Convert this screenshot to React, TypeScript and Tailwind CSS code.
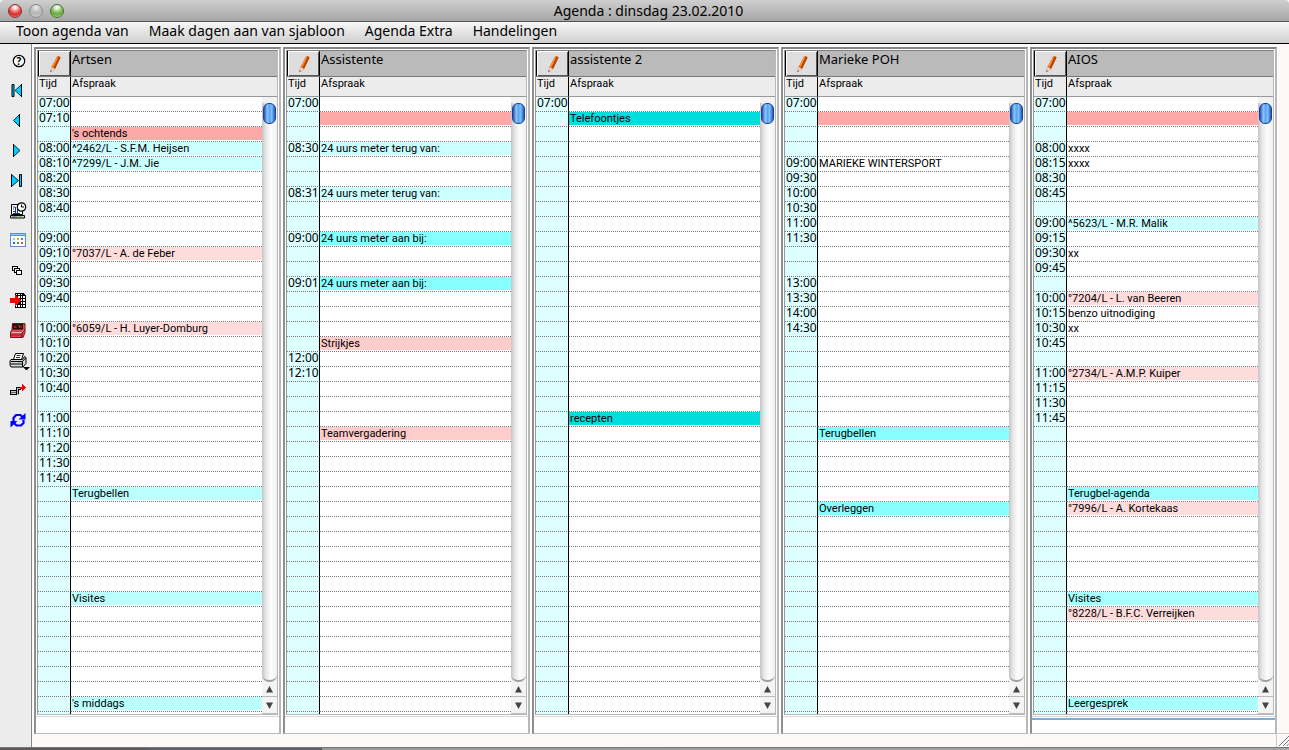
import { ReactNode } from "react";

type Tone = "rose" | "blush" | "pink" | "ice" | "aqua" | "sky" | "pale" | "cyan" | "teal";

type Entry = {
  row: number;
  text: string;
  tone?: Tone;
};

type Agenda = {
  name: string;
  times: Record<number, string>;
  entries: Entry[];
  active?: boolean;
};

const ROW_COUNT = 41;

const tones: Record<Tone, string> = {
  rose: "bg-[#ffa8a8]",
  blush: "bg-[#ffdcdc]",
  pink: "bg-[#ffcccc]",
  ice: "bg-[#ccffff]",
  aqua: "bg-[#aaffff]",
  sky: "bg-[#99ffff]",
  pale: "bg-[#bbffff]",
  cyan: "bg-[#88ffff]",
  teal: "bg-[#00dddd]",
};

const agendas: Agenda[] = [
  {
    name: "Artsen",
    times: {
      0: "07:00", 1: "07:10", 3: "08:00", 4: "08:10", 5: "08:20", 6: "08:30", 7: "08:40",
      9: "09:00", 10: "09:10", 11: "09:20", 12: "09:30", 13: "09:40",
      15: "10:00", 16: "10:10", 17: "10:20", 18: "10:30", 19: "10:40",
      21: "11:00", 22: "11:10", 23: "11:20", 24: "11:30", 25: "11:40",
    },
    entries: [
      { row: 2, text: "'s ochtends", tone: "rose" },
      { row: 3, text: "^2462/L - S.F.M. Heijsen", tone: "ice" },
      { row: 4, text: "^7299/L - J.M. Jie", tone: "ice" },
      { row: 10, text: "°7037/L - A. de Feber", tone: "blush" },
      { row: 15, text: "°6059/L - H. Luyer-Domburg", tone: "blush" },
      { row: 26, text: "Terugbellen", tone: "pale" },
      { row: 33, text: "Visites", tone: "pale" },
      { row: 40, text: "'s middags", tone: "pale" },
    ],
  },
  {
    name: "Assistente",
    times: { 0: "07:00", 3: "08:30", 6: "08:31", 9: "09:00", 12: "09:01", 17: "12:00", 18: "12:10" },
    entries: [
      { row: 1, text: "", tone: "rose" },
      { row: 3, text: "24 uurs meter terug van:", tone: "ice" },
      { row: 6, text: "24 uurs meter terug van:", tone: "ice" },
      { row: 9, text: "24 uurs meter aan bij:", tone: "cyan" },
      { row: 12, text: "24 uurs meter aan bij:", tone: "cyan" },
      { row: 16, text: "Strijkjes", tone: "pink" },
      { row: 22, text: "Teamvergadering", tone: "pink" },
    ],
  },
  {
    name: "assistente 2",
    times: { 0: "07:00" },
    entries: [
      { row: 1, text: "Telefoontjes", tone: "teal" },
      { row: 21, text: "recepten", tone: "teal" },
    ],
  },
  {
    name: "Marieke POH",
    times: {
      0: "07:00", 4: "09:00", 5: "09:30", 6: "10:00", 7: "10:30", 8: "11:00", 9: "11:30",
      12: "13:00", 13: "13:30", 14: "14:00", 15: "14:30",
    },
    entries: [
      { row: 1, text: "", tone: "rose" },
      { row: 4, text: "MARIEKE WINTERSPORT" },
      { row: 22, text: "Terugbellen", tone: "cyan" },
      { row: 27, text: "Overleggen", tone: "cyan" },
    ],
  },
  {
    name: "AIOS",
    active: true,
    times: {
      0: "07:00", 3: "08:00", 4: "08:15", 5: "08:30", 6: "08:45",
      8: "09:00", 9: "09:15", 10: "09:30", 11: "09:45",
      13: "10:00", 14: "10:15", 15: "10:30", 16: "10:45",
      18: "11:00", 19: "11:15", 20: "11:30", 21: "11:45",
    },
    entries: [
      { row: 1, text: "", tone: "rose" },
      { row: 3, text: "xxxx" },
      { row: 4, text: "xxxx" },
      { row: 8, text: "^5623/L - M.R. Malik", tone: "ice" },
      { row: 10, text: "xx" },
      { row: 13, text: "°7204/L - L. van Beeren", tone: "blush" },
      { row: 14, text: "benzo uitnodiging" },
      { row: 15, text: "xx" },
      { row: 18, text: "°2734/L - A.M.P. Kuiper", tone: "blush" },
      { row: 26, text: "Terugbel-agenda", tone: "sky" },
      { row: 27, text: "°7996/L - A. Kortekaas", tone: "blush" },
      { row: 33, text: "Visites", tone: "aqua" },
      { row: 34, text: "°8228/L - B.F.C. Verreijken", tone: "blush" },
      { row: 40, text: "Leergesprek", tone: "aqua" },
    ],
  },
];

const menus = ["Toon agenda van", "Maak dagen aan van sjabloon", "Agenda Extra", "Handelingen"];

function Svg({ children, crisp = false }: { children: ReactNode; crisp?: boolean }) {
  return (
    <svg
      className="shrink-0"
      width="24"
      height="20"
      viewBox="0 0 24 20"
      fill="none"
      shapeRendering={crisp ? "crispEdges" : "auto"}
    >
      {children}
    </svg>
  );
}

function HelpIcon() {
  return (
    <Svg>
      <circle cx="11" cy="11" r="5.7" fill="white" stroke="black" strokeWidth="1.2" />
      <text x="11" y="14.6" textAnchor="middle" fontSize="10" fontWeight="700" fontFamily="Noto Sans" fill="black">?</text>
    </Svg>
  );
}

function FirstIcon() {
  return (
    <Svg>
      <path d="M4 4.5h2v12H4Z" fill="#00ccff" stroke="black" />
      <path d="M13.500 4.500v12L7 10.500Z" fill="#00ccff" stroke="#003344" />
      <path d="M13.500 4v13" stroke="black" />
    </Svg>
  );
}

function PrevIcon() {
  return (
    <Svg>
      <path d="M11.5 4.5v12L5.5 10.5Z" fill="#00ccff" stroke="#003344" />
      <path d="M11.5 4v13" stroke="black" />
    </Svg>
  );
}

function NextIcon() {
  return (
    <Svg>
      <path d="M5.5 4.5v12L12 10.5Z" fill="#00ccff" stroke="#003344" />
      <path d="M5.5 4v13" stroke="black" />
    </Svg>
  );
}

function LastIcon() {
  return (
    <Svg>
      <path d="M3.5 4.5v12l7-6Z" fill="#00ccff" stroke="#003344" />
      <path d="M3.5 4v13" stroke="black" />
      <path d="M11.5 4.5h2v12h-2Z" fill="#00ccff" stroke="black" />
    </Svg>
  );
}

function PlanIcon() {
  return (
    <Svg>
      <path d="M3.5 4.5h11v10h-11Z" fill="white" stroke="black" />
      <path d="M2.5 15.5h14v2.500h-14Z" fill="#d8d8d8" stroke="black" />
      <path d="M4 17h5" stroke="#555" />
      <path d="M10 17h4" stroke="#3a3" />
      <path d="M5 7h2M5 9h1M5 11.5h2M7.5 7v6M9.5 9v4M5 13.5h7" stroke="#223388" strokeWidth="1.1" />
      <circle cx="13.5" cy="7" r="4.2" fill="white" stroke="black" strokeWidth="1.2" />
      <path d="M13.5 4.5V7h2.5" stroke="black" />
    </Svg>
  );
}

function MonthIcon() {
  return (
    <Svg crisp>
      <rect x="2" y="3" width="16" height="14" fill="#5b8fdc" />
      <rect x="3" y="6" width="14" height="10" fill="#fafcff" />
      <rect x="3" y="4" width="14" height="1" fill="#9dc3f5" />
      <path d="M5 8h2v2H5Z" fill="#a8c4e8" />
      <path d="M9 8h2v2H9Z" fill="#f0a030" />
      <path d="M13 8h2v2h-2Z" fill="#4a7ed0" />
      <path d="M5 12h2v2H5Z" fill="#3a66c0" />
      <path d="M9 12h2v2H9Z" fill="#45a045" />
      <path d="M13 12h2v2h-2Z" fill="#d05050" />
    </Svg>
  );
}

function StackIcon() {
  return (
    <Svg crisp>
      <path d="M4.5 6.5h5v4h-5Z" fill="white" stroke="black" />
      <path d="M6.5 8.5h5v4h-5Z" fill="white" stroke="black" />
      <path d="M8.5 10.5h5v4h-5Z" fill="white" stroke="black" />
    </Svg>
  );
}

function ExportIcon() {
  return (
    <Svg crisp>
      <path d="M7 3h8l3 3v12H7Z" fill="black" />
      <path
        d="M8 4h1v1H8Zm2 0h2v1h-2Zm3 0h1v1h-1ZM8 6h1v2H8Zm2 0h2v2h-2Zm3 0h1v2h-1Zm2 0h2v2h-2ZM10 9h2v2h-2Zm3 0h1v2h-1Zm2 0h2v2h-2Zm-2 3h1v2h-1Zm2 0h2v2h-2ZM8 15h1v2H8Zm2 0h2v2h-2Zm3 0h1v2h-1Zm2 0h2v2h-2Z"
        fill="white"
      />
      <path d="M2 8h5V5l6 5.500L7 16v-3H2Z" fill="#ff0000" />
    </Svg>
  );
}

function RegisterIcon() {
  return (
    <Svg>
      <path d="M4.5 3.5h12.5v9l-2 5H2.5v-5.5l1.5-2Z" fill="#d94452" stroke="#8a0f1c" />
      <path d="M4.5 4h10.5v5.5H4.5Z" fill="#2a0508" />
      <path d="M6 5.5l2.5 2.5M8.5 5.5L6 8M10 5.5h1.5V8M13 5.5V8" stroke="#e02030" />
      <path d="M3.5 12.5h10l2-2" stroke="#ffb8b8" />
      <path d="M3 15h10.5" stroke="#a01828" />
      <path d="M14 17v-4l3-3" stroke="#70101c" />
    </Svg>
  );
}

function PrinterIcon() {
  return (
    <Svg>
      <path d="M7.5 3.5h8l-2 6h-8Z" fill="white" stroke="black" />
      <path d="M8.5 5.5h4M8 7.5h4" stroke="black" strokeWidth="0.8" />
      <path d="M3 9.5h11.5l2-3 1.5 1v6l-3 3.5H3L2 15v-4Z" fill="#d6d6d6" stroke="black" />
      <path d="M3 11.5h11.5l3-3.5M2.5 14h12v3M14.5 11.5v3" stroke="black" />
      <path d="M11 13h2" stroke="#4c4" />
      <path d="M15 17h7l-3.5 3.500Z" fill="black" />
    </Svg>
  );
}

function MoveIcon() {
  return (
    <Svg crisp>
      <path d="M2.5 10.5h6v4h-6Z" fill="#c8c8c8" stroke="black" />
      <path d="M3 12.5h5" stroke="#666" />
      <path d="M8 7h5v3h-2v5H8Z" fill="#b8b8b8" />
      <path d="M8.5 15V7.5H13M10.5 14V9.500H13" stroke="black" />
      <path d="M12 7.5h3" stroke="#ff0000" strokeWidth="2" />
      <path d="M14 4l4.500 3.500L14 11Z" fill="#ff0000" />
    </Svg>
  );
}

function RefreshIcon() {
  return (
    <Svg>
      <path d="M5.500 11V8L8 5h4.500L15 7.500" stroke="#0000ff" strokeWidth="2.2" />
      <path d="M10.500 9.500H17.500V3Z" fill="#0000ff" />
      <path d="M15.500 10v3L13 15.500H8.500L6 13" stroke="#0000ff" strokeWidth="2.2" />
      <path d="M9.500 11H2.500v6.500Z" fill="#0000ff" />
    </Svg>
  );
}

function PencilIcon() {
  return (
    <svg width="16" height="18" viewBox="0 0 16 18">
      <path d="M10 1.5Q12 .5 13.5 2.5L8 14 4.5 12Z" fill="#e8650c" />
      <path d="M11.5 1.5Q13 1.5 13.5 2.5L8 14l-1.500-1Z" fill="#b84400" />
      <path d="M10.5 2.5 6 11.5" stroke="#ff9a4a" />
      <path d="M4.5 12 8 14l-4.500 3Z" fill="#f5dcc8" stroke="#c09080" strokeWidth=".5" />
      <path d="M3.8 15.2 3.3 17l1.5-.9Z" fill="#333" />
    </svg>
  );
}

const tools = [
  { label: "Help", icon: <HelpIcon /> },
  { label: "Eerste dag", icon: <FirstIcon /> },
  { label: "Vorige dag", icon: <PrevIcon /> },
  { label: "Volgende dag", icon: <NextIcon /> },
  { label: "Laatste dag", icon: <LastIcon /> },
  { label: "Planning", icon: <PlanIcon /> },
  { label: "Maand", icon: <MonthIcon /> },
  { label: "Vensters", icon: <StackIcon /> },
  { label: "Exporteren", icon: <ExportIcon /> },
  { label: "Kassa", icon: <RegisterIcon /> },
  { label: "Afdrukken", icon: <PrinterIcon /> },
  { label: "Verplaatsen", icon: <MoveIcon /> },
  { label: "Vernieuwen", icon: <RefreshIcon /> },
];

function ScrollBar() {
  return (
    <div className="flex h-full flex-col bg-[#f4f4f4]">
      <div className="flex flex-1 flex-col rounded-b-[7px] border-b-2 border-[#a0a0a0] bg-[linear-gradient(90deg,#c4c4c4,#e6e6e6_25%,#fdfdfd_60%,#f0f0f0)]">
        <div className="h-[6px] bg-[#f2f2f2]" />
        <div className="mx-px h-[21px] rounded-[6px] border border-[#1c3f94] bg-[linear-gradient(90deg,#1d50b8,#8fc4f8_30%,#5aa6f2_50%,#7cc0fa_70%,#2258b8)]" />
      </div>
      <button type="button" aria-label="Omhoog" className="flex h-[15px] items-center justify-center border-b border-[#bbb]">
        <svg width="7" height="7" viewBox="0 0 7 7"><path d="M3.5 0 7 6.500H0Z" fill="#444" /></svg>
      </button>
      <button type="button" aria-label="Omlaag" className="flex h-[17px] items-center justify-center border-b border-[#bbb]">
        <svg width="7" height="7" viewBox="0 0 7 7"><path d="M3.5 7 7 .5H0Z" fill="#444" /></svg>
      </button>
    </div>
  );
}

function AgendaPanel({ agenda }: { agenda: Agenda }) {
  return (
    <section className="min-w-0 flex-1 bg-white px-px pt-px">
      <div className="border-t-2 border-r-2 border-b border-l-2 border-t-[#858585] border-r-[#b8b8b8] border-b-[#b8b8b8] border-l-[#8f8f8f]">
        <div className="border-b border-[#d8d8d8] px-px py-px">
          <div className="border border-t-[#808080] border-r-[#b8b8b8] border-b-[#b8b8b8] border-l-[#999]">
            <table className="w-full table-fixed border-separate border-spacing-0 text-left">
              <colgroup>
                <col className="w-[33px]" />
                <col />
                <col className="w-[15px]" />
              </colgroup>
              <thead>
                <tr className="h-[26px] bg-[#bababa]">
                  <td className="border-b border-[#777] p-0">
                    <button
                      type="button"
                      aria-label={`${agenda.name} bewerken`}
                      className="flex h-[25px] w-full items-center justify-center border-x border-black bg-[#dedede] shadow-[inset_1px_1px_0_#fff,inset_-1px_-1px_0_#555]"
                    >
                      <PencilIcon />
                    </button>
                  </td>
                  <th colSpan={2} className="border-b border-[#777] p-0 pl-px align-top text-[13px] leading-[16px] font-normal">
                    {agenda.name}
                  </th>
                </tr>
                <tr className="h-[20px] bg-[#ececec] font-[Roboto,sans-serif] text-[11px] leading-[14px]">
                  <th className="border-r border-b border-r-black border-b-[#999] p-0 pl-px align-top font-normal">Tijd</th>
                  <th colSpan={2} className="border-b border-[#999] p-0 pl-px align-top font-normal">Afspraak</th>
                </tr>
              </thead>
              <tbody className="whitespace-nowrap">
                {Array.from({ length: ROW_COUNT }, (_, row) => {
                  const entry = agenda.entries.find((item) => item.row === row);
                  return (
                    <tr key={row} className="h-[15px]">
                      <td className="border-b border-dotted border-b-[#777] bg-[#ddffff] p-0 pl-px align-top text-[12px] leading-[12px] [border-right:1px_solid_black]">
                        <div className="h-[14px]">{agenda.times[row]}</div>
                      </td>
                      <td className="border-b border-dotted border-[#777] p-0 align-top font-[Roboto,sans-serif] text-[11px] leading-[13px]">
                        <div className={`h-[13px] pl-px ${entry?.tone ? tones[entry.tone] : ""}`}>{entry?.text}</div>
                      </td>
                      {row === 0 && (
                        <td rowSpan={ROW_COUNT + 1} className="h-px p-0">
                          <ScrollBar />
                        </td>
                      )}
                    </tr>
                  );
                })}
                <tr className="h-[2px]">
                  <td className="border-r border-black bg-[#ddffff] p-0" />
                  <td className="p-0" />
                </tr>
              </tbody>
            </table>
          </div>
        </div>
        <div className="flex h-[16px] flex-col pt-px">
          {agenda.active && <div className="h-[2px] bg-[#7aadda]" />}
        </div>
      </div>
    </section>
  );
}

export default function App() {
  return (
    <div className="flex min-h-screen flex-col bg-[#fdf9f9] font-['Noto_Sans',sans-serif] text-black">
      <header className="grid h-[22px] grid-cols-[1fr_auto_1fr] items-center rounded-t-[4px] border-b border-[#555] bg-linear-to-b from-[#cfcfcf] to-[#a6a6a6] pl-2">
        <div className="flex gap-[7px]">
          <button type="button" aria-label="Sluiten" className="size-[14px] rounded-full border border-[#8c2f2c] bg-[radial-gradient(circle_at_50%_20%,#fff_5%,#f0605c_45%,#d8282a_65%,#ffb0a8)]" />
          <button type="button" aria-label="Minimaliseren" className="size-[14px] rounded-full border border-[#8a8a8a] bg-[radial-gradient(circle_at_50%_20%,#e8e8e8_5%,#b4b4b4_50%,#d4d4d4)]" />
          <button type="button" aria-label="Vergroten" className="size-[14px] rounded-full border border-[#4a7030] bg-[radial-gradient(circle_at_50%_20%,#fff_5%,#88c060_45%,#68a83c_65%,#d0f8a8)]" />
        </div>
        <h1 className="text-[14px] leading-[20px]">Agenda : dinsdag 23.02.2010</h1>
      </header>

      <nav className="flex h-[22px] items-start gap-5 border-b border-black bg-linear-to-b from-[#f8f8f8] to-[#cfcfcf] pl-4">
        {menus.map((menu) => (
          <button key={menu} type="button" className="text-[14px] leading-[18px]">
            {menu}
          </button>
        ))}
      </nav>

      <div className="flex flex-1">
        <aside className="flex w-8 shrink-0 flex-col border-r border-[#888] bg-[#ececec] pt-px">
          {tools.map((tool) => (
            <button key={tool.label} type="button" aria-label={tool.label} className="flex h-[30px] items-center pl-2">
              {tool.icon}
            </button>
          ))}
        </aside>
        <main className="flex min-w-0 flex-1 items-start pt-[2px] pr-[11px] pl-px">
          {agendas.map((agenda) => (
            <AgendaPanel key={agenda.name} agenda={agenda} />
          ))}
        </main>
        <div className="flex w-0 items-end justify-end">
          <svg className="shrink-0" width="13" height="14" viewBox="0 0 13 14" fill="none">
            <path d="M.5 14V.5H13" stroke="#ccc" />
            <path d="M3 13 13 3M7 13l6-6M10.5 13l2.500-2.500" stroke="#777" />
          </svg>
        </div>
      </div>
      <div className="h-[3px] border-t border-[#777] bg-[linear-gradient(90deg,#5c585a_0,#5c585a_11%,#5b606a_12%,#5b606a_25%,#999_25%,#a5a5a5)]" />
    </div>
  );
}
